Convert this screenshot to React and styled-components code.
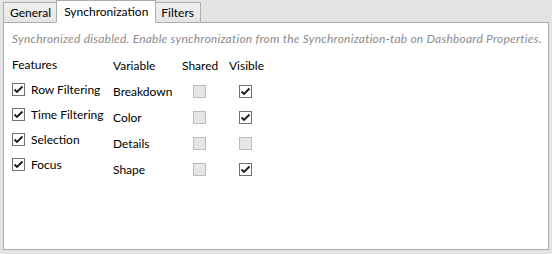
import React from "react";
import styled, { createGlobalStyle } from "styled-components";

const Global = createGlobalStyle`
  html, body { margin: 0; padding: 0; background: #e3e3e3; }
  body { font-family: Lato, "Open Sans", sans-serif; font-size: 12px; color: #000; }
`;

const Window = styled.div`
  width: 552px;
  height: 254px;
  box-sizing: border-box;
  padding: 0 3px 0 3px;
  display: flex;
  flex-direction: column;
`;

const TabStrip = styled.div`
  display: flex;
  align-items: flex-end;
  height: 22px;
  position: relative;
  z-index: 1;
`;

const Tab = styled.div`
  box-sizing: border-box;
  height: ${(p) => (p.$active ? "23px" : "20px")};
  margin-bottom: ${(p) => (p.$active ? "-1px" : "0")};
  padding: 0 ${(p) => (p.$active ? "7px" : "6px")};
  margin-left: ${(p) => (p.$active ? "-2px" : "0")};
  margin-right: ${(p) => (p.$active ? "-2px" : "0")};
  border: 1px solid #acacac;
  border-bottom: ${(p) => (p.$active ? "1px solid #fff" : "none")};
  background: ${(p) => (p.$active ? "#fff" : "linear-gradient(#f0f0f0, #e5e5e5)")};
  display: flex;
  align-items: center;
  padding-top: ${(p) => (p.$active ? "0" : "1px")};
  line-height: 16px;
  white-space: nowrap;
  position: relative;
  z-index: ${(p) => (p.$active ? 2 : 1)};
`;

const Panel = styled.div`
  box-sizing: border-box;
  width: 546px;
  height: 228px;
  background: #fff;
  border: 1px solid #acacac;
  padding: 8px 0 0 8px;
`;

const Message = styled.div`
  font-style: italic;
  color: #8c8c8c;
  line-height: 16px;
  letter-spacing: 0.22px;
  white-space: nowrap;
`;

const Table = styled.div`
  display: flex;
  margin-top: 5px;
`;

const FeatureColumn = styled.div`
  width: 101px;
  display: flex;
  flex-direction: column;
`;

const Header = styled.div`
  height: ${(p) => p.$h}px;
  display: flex;
  align-items: center;
  white-space: nowrap;
`;

const FeatureRow = styled.label`
  height: 25px;
  display: flex;
  align-items: center;
  gap: 6px;
  white-space: nowrap;
`;

const VarGrid = styled.div`
  display: grid;
  grid-template-columns: 69px 47px 40px;
  grid-auto-rows: 26px;
  align-items: center;
`;

const Cell = styled.div`
  display: flex;
  align-items: center;
  padding-left: ${(p) => p.$pad || 0}px;
  white-space: nowrap;
`;

const Box = styled.span`
  box-sizing: border-box;
  width: 13px;
  height: 13px;
  flex: none;
  display: inline-flex;
  align-items: center;
  justify-content: center;
  border: 1px solid ${(p) => (p.$disabled ? "#bcbcbc" : "#707070")};
  background: ${(p) => (p.$disabled ? "#e6e6e6" : "#fff")};
`;

function Check({ checked, disabled }) {
  return (
    <Box $disabled={disabled}>
      {checked && (
        <svg width="11" height="11" viewBox="0 0 11 11">
          <path d="M1.5 5.5 L4 8 L9.5 2.5" fill="none" stroke="#1a1a1a" strokeWidth="1.8" />
        </svg>
      )}
    </Box>
  );
}

const features = ["Row Filtering", "Time Filtering", "Selection", "Focus"];
const variables = [
  { name: "Breakdown", visible: true, disabledVisible: false },
  { name: "Color", visible: true, disabledVisible: false },
  { name: "Details", visible: false, disabledVisible: true },
  { name: "Shape", visible: true, disabledVisible: false },
];

export default function App() {
  return (
    <>
      <Global />
      <Window>
        <TabStrip>
          <Tab>General</Tab>
          <Tab $active>Synchronization</Tab>
          <Tab>Filters</Tab>
        </TabStrip>
        <Panel>
          <Message>
            Synchronized disabled. Enable synchronization from the Synchronization-tab on Dashboard Properties.
          </Message>
          <Table>
            <FeatureColumn>
              <Header $h={25}>Features</Header>
              {features.map((f) => (
                <FeatureRow key={f}>
                  <Check checked />
                  {f}
                </FeatureRow>
              ))}
            </FeatureColumn>
            <VarGrid>
              <Header $h={26}>Variable</Header>
              <Header $h={26}>Shared</Header>
              <Header $h={26}>Visible</Header>
              {variables.map((v) => (
                <React.Fragment key={v.name}>
                  <Cell>{v.name}</Cell>
                  <Cell $pad={11}>
                    <Check disabled />
                  </Cell>
                  <Cell $pad={10}>
                    <Check checked={v.visible} disabled={v.disabledVisible} />
                  </Cell>
                </React.Fragment>
              ))}
            </VarGrid>
          </Table>
        </Panel>
      </Window>
    </>
  );
}
